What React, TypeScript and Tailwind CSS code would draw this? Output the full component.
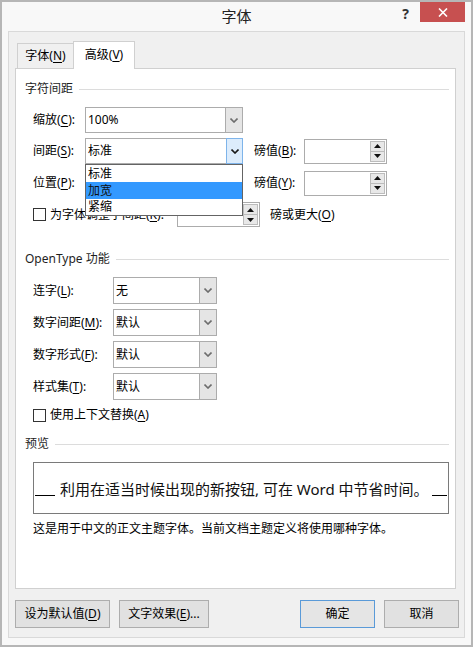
import React from "react";

const FONT = { fontFamily: '"Noto Sans", "Noto Sans CJK SC", sans-serif' };

function Chevron({ dark }: { dark?: boolean }) {
  return (
    <svg width="8" height="5" viewBox="0 0 8 5">
      <path d="M0.5 0.5 L4 4 L7.5 0.5" fill="none" stroke={dark ? "#1a1a1a" : "#6d6d6d"} strokeWidth="1.6" />
    </svg>
  );
}

function U({ children }: { children: React.ReactNode }) {
  return <span className="underline underline-offset-2">{children}</span>;
}

function Select({ value, w, h, open }: { value: string; w: string; h: string; open?: boolean }) {
  return (
    <div className={`relative flex ${w} ${h} border border-[#acacac] bg-white`}>
      <div className="flex-1 flex items-center pl-[2px] text-[12px] leading-none text-black">{value}</div>
      <div
        className={`w-[17px] flex items-center justify-center border-l ${
          open ? "bg-[#dcecfc] border-[#7eb4ea] -my-px -mr-px border border-l" : "bg-[#e5e5e5] border-[#acacac]"
        }`}
      >
        <Chevron dark={open} />
      </div>
    </div>
  );
}

function Spin({ w }: { w: string }) {
  return (
    <div className={`flex ${w} h-[25px] border border-[#acacac] bg-white`}>
      <div className="flex-1" />
      <div className="w-[16px] flex flex-col py-px pr-px">
        <div className="flex-1 flex items-center justify-center bg-[#e8e8e8] border border-[#bcbcbc]">
          <svg width="7" height="4" viewBox="0 0 7 4"><path d="M3.5 0 L7 4 L0 4 Z" fill="#111" /></svg>
        </div>
        <div className="flex-1 flex items-center justify-center bg-[#e8e8e8] border border-t-0 border-[#bcbcbc]">
          <svg width="7" height="4" viewBox="0 0 7 4"><path d="M0 0 L7 0 L3.5 4 Z" fill="#111" /></svg>
        </div>
      </div>
    </div>
  );
}

function Header({ children, className }: { children: React.ReactNode; className?: string }) {
  return (
    <div className={`flex items-center h-[16px] pl-[9px] pr-[6px] gap-[6px] ${className || ""}`}>
      <span className="text-[12px] leading-[16px] text-[#1e1e1e] whitespace-nowrap">{children}</span>
      <div className="flex-1 h-px bg-[#dcdcdc]" />
    </div>
  );
}

function Checkbox() {
  return <div className="w-[13px] h-[13px] border border-[#333] bg-white shrink-0" />;
}

function Button({ children, w, primary }: { children: React.ReactNode; w: string; primary?: boolean }) {
  return (
    <div
      className={`${w} h-[28px] flex items-center justify-center text-[12px] leading-none text-black border ${
        primary ? "border-[#5a9ad8] bg-[#e5e5e5]" : "border-[#adadad] bg-[#e1e1e1]"
      }`}
    >
      {children}
    </div>
  );
}

export default function App() {
  return (
    <div className="w-[473px] h-[647px] bg-[#f8f8f8] border-2 border-[#b6b6b6] flex flex-col overflow-hidden" style={FONT}>
      {/* Title bar */}
      <div className="relative h-[29px] flex items-center justify-center">
        <span className="text-[15px] leading-none text-[#222] -mt-[1px]">字体</span>
        <div className="absolute top-0 right-[6px] flex items-start">
          <span className="text-[14px] font-bold leading-none text-[#333] mt-[5px] mr-[11px]">?</span>
          <div className="w-[45px] h-[20px] bg-[#c75050] flex items-center justify-center">
            <svg width="10" height="9" viewBox="0 0 10 9">
              <path d="M1 0.5 L9 8.5 M9 0.5 L1 8.5" stroke="#fff" strokeWidth="1.6" />
            </svg>
          </div>
        </div>
      </div>

      {/* Client */}
      <div className="mx-[6px] h-[607px] border border-[#d9d9d9] bg-[#f0f0f0] flex flex-col">
        {/* Tabs */}
        <div className="flex items-end h-[36px] pl-[6px]">
          <div className="ml-[2px] w-[56px] h-[25px] border-l border-t border-[#d0d0d0] flex items-center justify-center text-[12px] leading-none text-black">
            字体(<U>N</U>)
          </div>
          <div className="relative z-10 -mb-px w-[62px] h-[28px] border border-b-0 border-[#d0d0d0] bg-white flex items-center justify-center text-[12px] leading-none text-black pb-[2px]">
            高级(<U>V</U>)
          </div>
        </div>

        {/* Panel */}
        <div className="ml-[6px] w-[441px] h-[521px] border border-[#d0d0d0] bg-white flex flex-col pt-[12px]">
          <Header>字符间距</Header>

          <div className="pl-[17px] flex flex-col text-[12px] leading-none text-black">
            {/* 缩放 */}
            <div className="mt-[10px] flex items-center h-[26px]">
              <span className="w-[52px]">缩放(<U>C</U>):</span>
              <Select value="100%" w="w-[158px]" h="h-[26px]" />
            </div>
            {/* 间距 */}
            <div className="mt-[5px] flex items-center h-[26px] relative z-20">
              <span className="w-[52px]">间距(<U>S</U>):</span>
              <div className="relative">
                <Select value="标准" w="w-[158px]" h="h-[26px]" open />
                <div className="absolute top-full left-0 w-[158px] h-[52px] border border-[#646464] bg-white flex flex-col text-[12px] leading-none">
                  <div className="h-[17px] flex items-center pl-[2px]">标准</div>
                  <div className="h-[17px] flex items-center pl-[2px] bg-[#3399ff] text-[#111]">加宽</div>
                  <div className="h-[16px] flex items-center pl-[2px]">紧缩</div>
                </div>
              </div>
              <span className="ml-[11px] w-[50px]">磅值(<U>B</U>):</span>
              <Spin w="w-[83px]" />
            </div>
            {/* 位置 */}
            <div className="mt-[6px] flex items-center h-[26px]">
              <span className="w-[52px]">位置(<U>P</U>):</span>
              <Select value="" w="w-[158px]" h="h-[26px]" />
              <span className="ml-[11px] w-[50px]">磅值(<U>Y</U>):</span>
              <Spin w="w-[83px]" />
            </div>
            {/* 字距调整 */}
            <div className="mt-[6px] flex items-center h-[25px]">
              <Checkbox />
              <span className="ml-[4px] w-[127px] whitespace-nowrap">为字体调整字间距(<U>K</U>):</span>
              <Spin w="w-[83px]" />
              <span className="ml-[10px]">磅或更大(<U>O</U>)</span>
            </div>
          </div>

          <Header className="mt-[24px]">OpenType 功能</Header>

          <div className="pl-[17px] flex flex-col gap-[5px] mt-[10px] text-[12px] leading-none text-black">
            <div className="flex items-center h-[27px]">
              <span className="w-[80px]">连字(<U>L</U>):</span>
              <Select value="无" w="w-[104px]" h="h-[27px]" />
            </div>
            <div className="flex items-center h-[27px]">
              <span className="w-[80px]">数字间距(<U>M</U>):</span>
              <Select value="默认" w="w-[104px]" h="h-[27px]" />
            </div>
            <div className="flex items-center h-[27px]">
              <span className="w-[80px]">数字形式(<U>F</U>):</span>
              <Select value="默认" w="w-[104px]" h="h-[27px]" />
            </div>
            <div className="flex items-center h-[27px]">
              <span className="w-[80px]">样式集(<U>T</U>):</span>
              <Select value="默认" w="w-[104px]" h="h-[27px]" />
            </div>
          </div>

          <div className="pl-[17px] mt-[7px] flex items-center h-[16px] text-[12px] leading-none text-black">
            <Checkbox />
            <span className="ml-[4px]">使用上下文替换(<U>A</U>)</span>
          </div>

          <Header className="mt-[13px]">预览</Header>

          <div className="ml-[17px] mr-[6px] mt-[10px] h-[52px] border border-[#7a7a7a] flex items-center pl-px pr-[1px] pt-[3px]">
            <div className="w-[20px] h-px bg-black self-end mb-[17px] shrink-0" />
            <span className="ml-[5px] shrink-0 text-[15px] leading-none text-[#111] whitespace-nowrap">
              利用在适当时候出现的新按钮, 可在 Word 中节省时间。
            </span>
            <div className="ml-[3px] flex-1 h-px bg-black self-end mb-[17px]" />
          </div>

          <div className="pl-[17px] mt-[7px] text-[12px] leading-[16px] text-black">
            这是用于中文的正文主题字体。当前文档主题定义将使用哪种字体。
          </div>
        </div>

        {/* Buttons */}
        <div className="mt-[11px] ml-[6px] mr-[5px] flex items-center">
          <Button w="w-[95px]">设为默认值(<U>D</U>)</Button>
          <div className="ml-[9px]">
            <Button w="w-[90px]">文字效果(<U>E</U>)...</Button>
          </div>
          <div className="flex-1" />
          <Button w="w-[75px]" primary>确定</Button>
          <div className="ml-[9px]">
            <Button w="w-[75px]">取消</Button>
          </div>
        </div>
      </div>
    </div>
  );
}
